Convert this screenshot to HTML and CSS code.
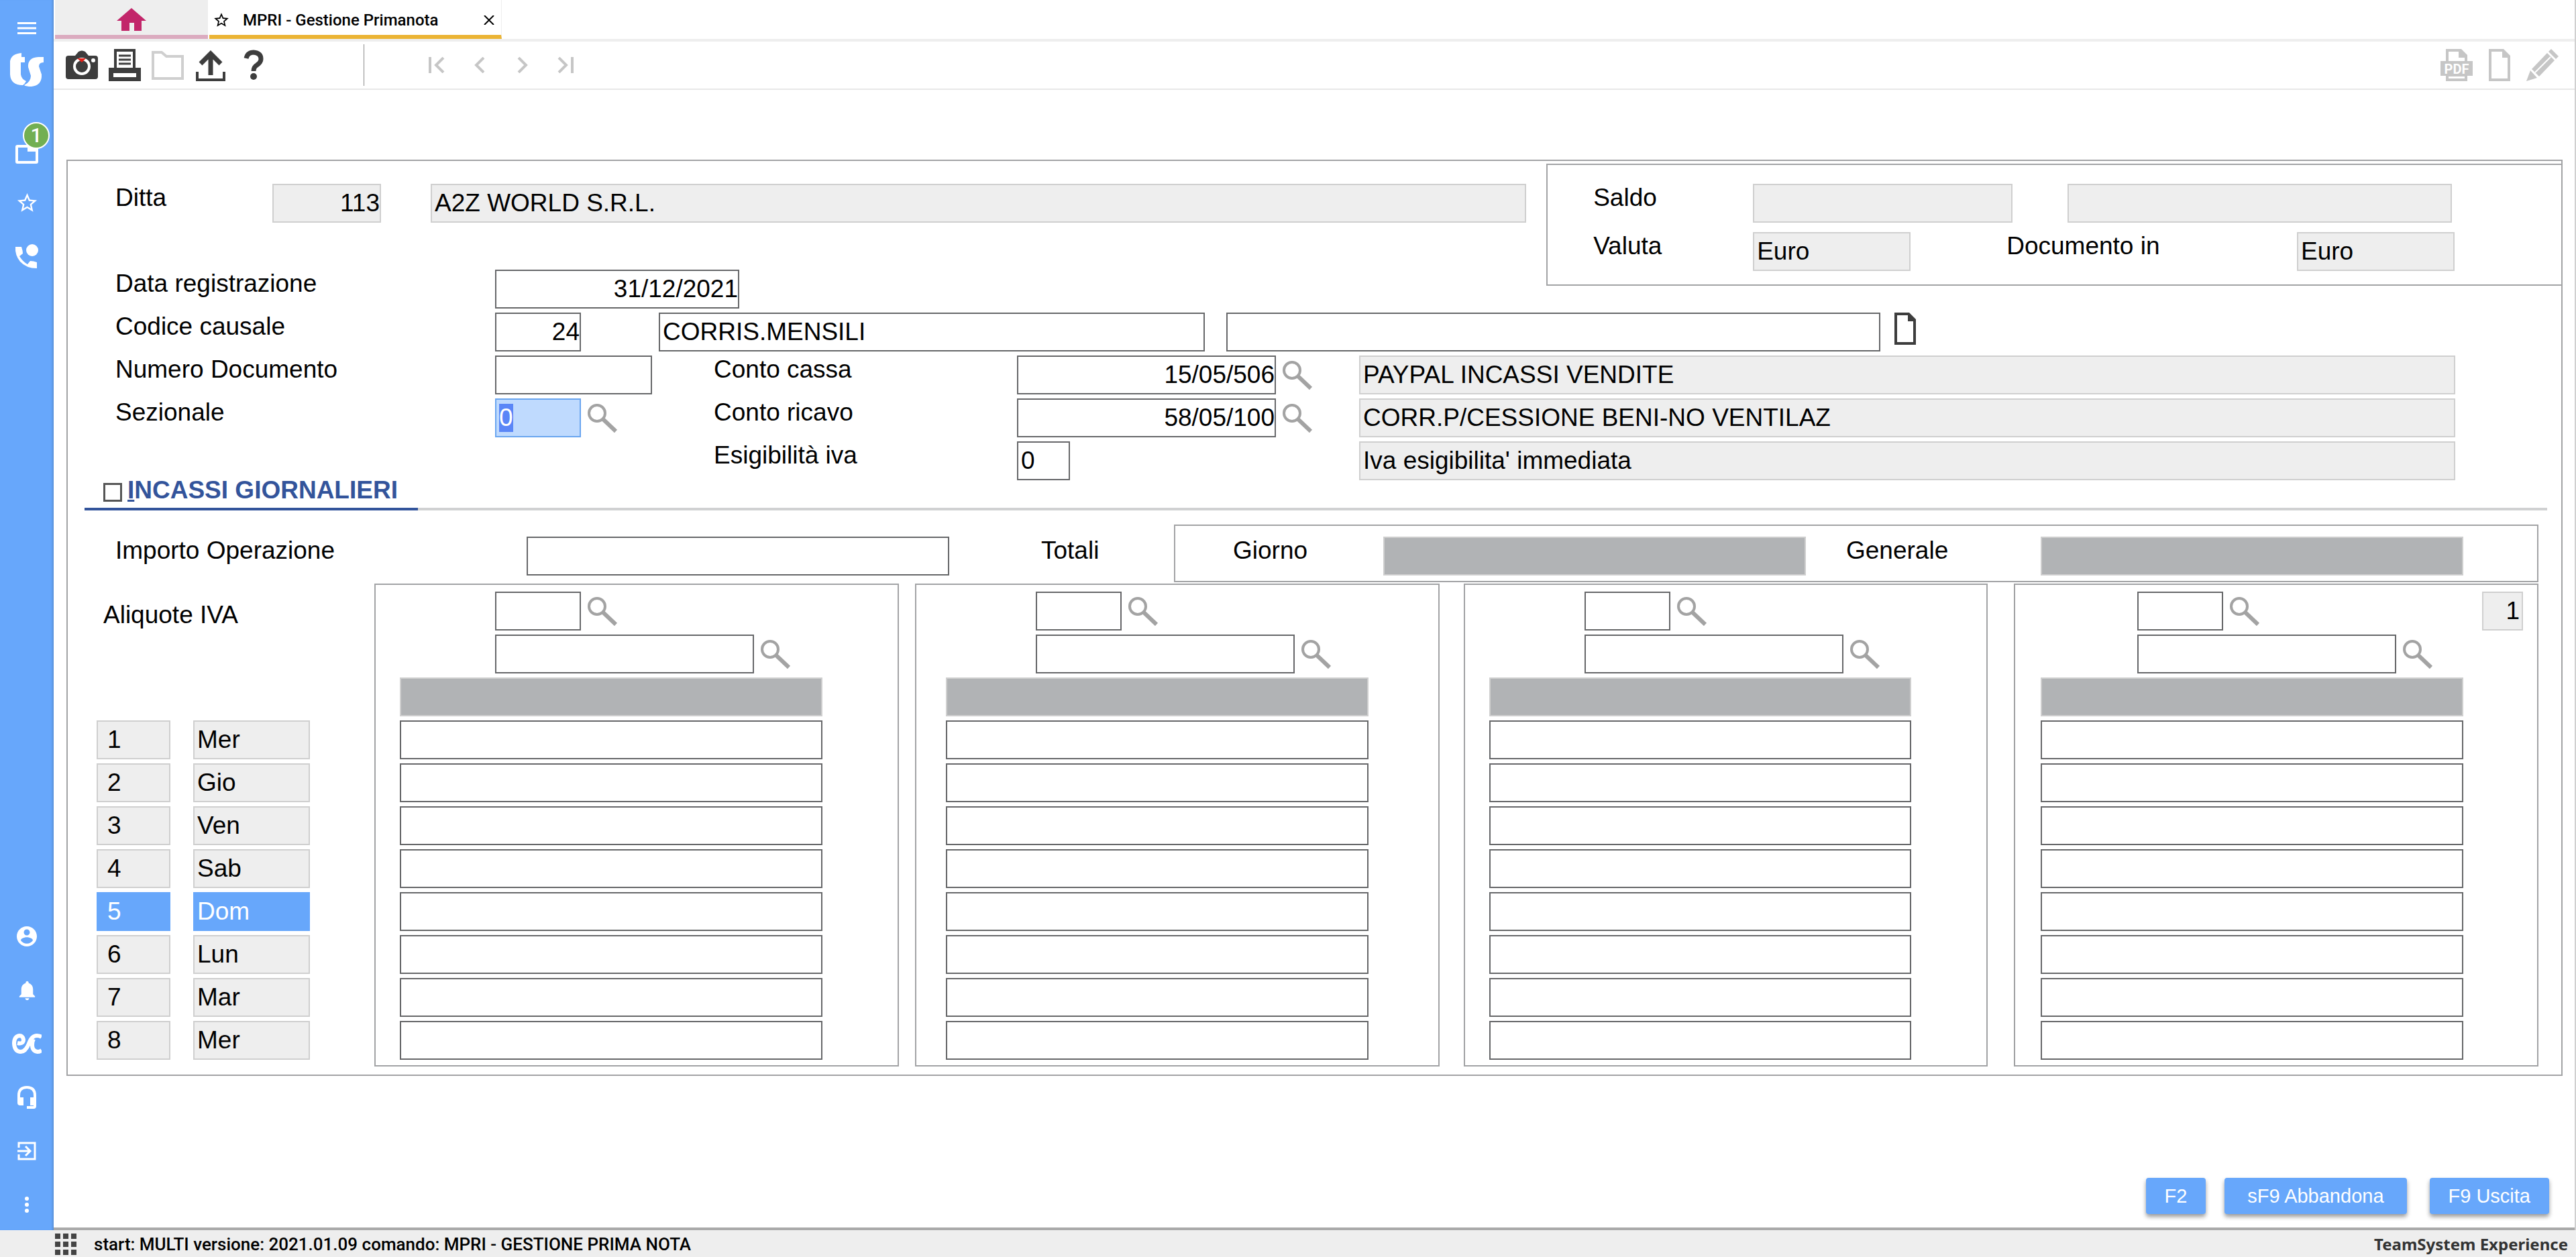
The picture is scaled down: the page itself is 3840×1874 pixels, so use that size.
FILE: index.html
```html
<!DOCTYPE html>
<html lang="it">
<head>
    <meta charset="UTF-8">
    <meta name="viewport" content="width=device-width, initial-scale=1.0">
    <title>MPRI - Gestione Primanota</title>
    <link rel="stylesheet" href="styles.css">
</head>
<body>
    <!-- icone condivise -->
    <svg class="symbols" aria-hidden="true">
        <symbol id="i-lens" viewBox="0 0 46 46">
            <circle cx="15" cy="16" r="12" fill="none" stroke="#a3a3a3" stroke-width="4"/>
            <path d="M24 25L43 43" stroke="#a3a3a3" stroke-width="6"/>
        </symbol>
        <symbol id="i-doc" viewBox="0 0 48 48">
            <path fill="currentColor" fill-rule="evenodd" d="M8 0H30L40 10V48H8ZM12 4V44H36V13H28V4Z"/>
        </symbol>
        <symbol id="i-star" viewBox="0 0 24 24">
            <path fill="currentColor" d="M22 9.24l-7.19-.62L12 2 9.19 8.63 2 9.24l5.46 4.73L5.82 21 12 17.27 18.18 21l-1.63-7.03L22 9.24zM12 15.4l-3.76 2.27 1-4.28-3.32-2.88 4.38-.38L12 6.1l1.71 4.04 4.38.38-3.32 2.88 1 4.28L12 15.4z"/>
        </symbol>
    </svg>

    <div class="main">
        <nav class="sidebar">
            <button class="side-btn side-menu" aria-label="Menu">
                <svg viewBox="0 0 28 18" width="28" height="18"><path d="M0 1.5H28M0 9H28M0 16.5H28" stroke="#fff" stroke-width="3"/></svg>
            </button>
            <button class="side-btn side-logo" aria-label="TeamSystem">
                <svg viewBox="0 0 50 50" width="50" height="50" fill="#fff">
                    <path d="M0 12Q2 1 17 0V6H22V14H16V32Q17 39 24 42Q22 46 19 48Q1 48 0 32Z"/>
                    <path d="M50 6V14Q43 14 43 20L47 32Q48 48 32 50Q24 50 21 48Q31 43 31 34L27 21Q26 7 42 6Z"/>
                </svg>
            </button>
            <button class="side-btn side-cards" aria-label="Attività">
                <svg viewBox="0 0 34 28" width="34" height="28">
                    <path d="M3 2H31Q32 2 32 3V25Q32 26 31 26H3Q2 26 2 25V3Q2 2 3 2Z" fill="none" stroke="#fff" stroke-width="4"/>
                    <path d="M18 2H32V10H18Z" fill="#fff"/>
                </svg>
                <span class="badge">1</span>
            </button>
            <button class="side-btn" aria-label="Preferiti"><svg class="side-icon"><use href="#i-star"/></svg></button>
            <button class="side-btn side-phone" aria-label="Chiamate">
                <svg viewBox="0 0 36 36" width="36" height="36" fill="#fff">
                    <circle cx="26" cy="9" r="9"/>
                    <path d="M1 4H10Q12 10 12 14L7 18Q12 26 19 30L23 25Q28 25 33 27V36Q17 36 8 26Q0 16 1 4Z"/>
                </svg>
            </button>
            <div class="side-bottom">
                <button class="side-btn" aria-label="Utente">
                    <svg viewBox="2 2 20 20" width="30" height="30"><path fill="#fff" d="M12 2C6.48 2 2 6.48 2 12s4.48 10 10 10 10-4.48 10-10S17.52 2 12 2zm0 3c1.66 0 3 1.34 3 3s-1.34 3-3 3-3-1.34-3-3 1.34-3 3-3zm0 14.200c-2.500 0-4.710-1.280-6-3.220.030-1.990 4-3.080 6-3.080 1.990 0 5.970 1.090 6 3.080-1.290 1.940-3.500 3.220-6 3.220z"/></svg>
                </button>
                <button class="side-btn" aria-label="Notifiche"><svg class="side-icon" viewBox="0 0 24 24"><path fill="#fff" d="M12 22c1.100 0 2-.900 2-2h-4c0 1.100.900 2 2 2zm6-6v-5c0-3.070-1.640-5.640-4.500-6.320V4c0-.830-.670-1.500-1.500-1.500s-1.500.670-1.500 1.500v.680C7.630 5.360 6 7.920 6 11v5l-2 2v1h16v-1l-2-2z"/></svg></button>
                <button class="side-btn" aria-label="Euroconference">
                    <svg viewBox="0 0 44 30" width="44" height="30"><path d="M8 14Q17 16 17 9Q16 3 11 3Q3 4 3 15Q4 27 13 27Q20 27 25 15Q29 3 37 3Q41 3 44 5M44 25Q41 27 38 27Q30 26 30 17Q30 12 32 8" fill="none" stroke="#fff" stroke-width="6"/></svg>
                </button>
                <button class="side-btn" aria-label="Assistenza">
                    <svg viewBox="0 0 28 34" width="28" height="34"><path d="M2 20V14Q2 2 14 2T26 14V30Q26 32 24 32H14" fill="none" stroke="#fff" stroke-width="4"/><path d="M0 17H9V29H4Q0 29 0 25ZM19 17H28V29H19Z" fill="#fff"/></svg>
                </button>
                <button class="side-btn" aria-label="Esci">
                    <svg viewBox="0 0 28 28" width="28" height="28"><path d="M2 9V2H26V26H2V19M0 14H18M12 7L19 14L12 21" fill="none" stroke="#fff" stroke-width="3"/></svg>
                </button>
                <button class="side-btn" aria-label="Altro">
                    <svg viewBox="0 0 8 24" width="8" height="24" fill="#fff"><circle cx="4" cy="3" r="3"/><circle cx="4" cy="12" r="3"/><circle cx="4" cy="21" r="3"/></svg>
                </button>
            </div>
        </nav>

        <div class="content">
            <header class="tabs">
                <a class="tab-home" href="#" aria-label="Home">
                    <svg viewBox="0 0 44 34" width="44" height="34"><path fill="#c2266a" d="M22 0L44 19H37V34H26V22H19V34H7V19H0Z"/></svg>
                </a>
                <div class="tab-active">
                    <svg class="tab-star"><use href="#i-star"/></svg>
                    <span class="tab-title">MPRI - Gestione Primanota</span>
                    <button class="tab-close" aria-label="Chiudi">
                        <svg viewBox="0 0 16 14" width="16" height="14"><path d="M1 0L15 14M15 0L1 14" stroke="#000" stroke-width="2"/></svg>
                    </button>
                </div>
            </header>

            <div class="toolbar">
                <div class="tools">
                    <button class="tool" aria-label="Foto">
                        <svg viewBox="0 0 48 48"><path fill="#3d3d3d" d="M4 10H14L19 4Q24 1 29 4L34 10H44Q48 10 48 14V41Q48 45 44 45H4Q0 45 0 41V14Q0 10 4 10Z"/><circle cx="24" cy="26" r="11" fill="none" stroke="#fff" stroke-width="4"/><path d="M17 14H30L24 20Z" fill="#e32119"/><circle cx="41" cy="17" r="3" fill="#fff"/></svg>
                    </button>
                    <button class="tool" aria-label="Stampa">
                        <svg viewBox="0 0 48 48"><path fill="#3d3d3d" fill-rule="evenodd" d="M8 0H40V28H48V48H0V28H8ZM12 4V28H36V4ZM7 36V42H41V36Z"/><path d="M15 10H33M15 16H33M15 22H33" stroke="#3d3d3d" stroke-width="3"/></svg>
                    </button>
                    <button class="tool" aria-label="Apri">
                        <svg viewBox="0 0 48 48"><path fill="none" stroke="#cfcfcf" stroke-width="4" d="M2 5H15L22 11H46V44H2Z"/></svg>
                    </button>
                    <button class="tool" aria-label="Invia">
                        <svg viewBox="0 0 48 48"><path fill="none" stroke="#3d3d3d" stroke-width="7" d="M24 39V7M9 22L24 7L39 22"/><path fill="none" stroke="#3d3d3d" stroke-width="4" d="M4 34V46H44V34"/></svg>
                    </button>
                    <button class="tool" aria-label="Aiuto">
                        <svg viewBox="0 0 48 48"><path fill="none" stroke="#3d3d3d" stroke-width="7" d="M13 14Q15 5 24 5Q35 6 35 15Q35 20 29 24Q24 27 24 33"/><circle cx="24" cy="41" r="5" fill="#3d3d3d"/></svg>
                    </button>
                </div>
                <div class="pager">
                    <button class="page-btn" aria-label="Primo"><svg viewBox="0 0 24 24"><path d="M2 0V24M22 1L11 12L22 23"/></svg></button>
                    <button class="page-btn" aria-label="Precedente"><svg viewBox="0 0 24 24"><path d="M18 1L7 12L18 23"/></svg></button>
                    <button class="page-btn" aria-label="Successivo"><svg viewBox="0 0 24 24"><path d="M6 1L17 12L6 23"/></svg></button>
                    <button class="page-btn" aria-label="Ultimo"><svg viewBox="0 0 24 24"><path d="M2 1L13 12L2 23M22 0V24"/></svg></button>
                </div>
                <div class="tools tools-right">
                    <button class="tool" aria-label="PDF">
                        <svg viewBox="0 0 48 48"><path fill="#c6c6c6" fill-rule="evenodd" d="M8 0H31L40 9V18H48V40H40V48H8V40H0V18H8ZM12 4V18H36V13H27V4ZM12 41V44H36V41Z"/><text x="24" y="37" class="pdf-text">PDF</text></svg>
                    </button>
                    <button class="tool" aria-label="Nuovo"><svg><use href="#i-doc"/></svg></button>
                    <button class="tool" aria-label="Modifica">
                        <svg viewBox="0 0 48 48" fill="#c6c6c6"><path d="M37 0L48 11L44 15L33 4Z"/><path d="M31 6L42 17L19 41L8 30Z"/><path d="M6 32L16 43L0 48Z"/><path d="M13 35L36 12" stroke="#fff" stroke-width="2"/></svg>
                    </button>
                </div>
            </div>

            <main class="work">
                <form class="panel" onsubmit="return false">
                    <div class="head">
                        <div class="head-left">
                            <div class="row row-ditta">
                                <label for="ditta">Ditta</label>
                                <input class="field ro num" id="ditta" value="113" readonly>
                                <input class="field ro ragione" aria-label="Ragione sociale" value="A2Z WORLD S.R.L." readonly>
                            </div>
                            <div class="row">
                                <label class="label-main" for="data">Data registrazione</label>
                                <input class="field num data" id="data" value="31/12/2021">
                            </div>
                        </div>
                        <div class="saldo">
                            <div class="row">
                                <label for="saldo">Saldo</label>
                                <input class="field ro saldo-valuta" id="saldo" readonly>
                                <input class="field ro saldo-importo" aria-label="Importo saldo" readonly>
                            </div>
                            <div class="row row-valuta">
                                <label for="valuta">Valuta</label>
                                <input class="field ro valuta" id="valuta" value="Euro" readonly>
                                <label class="label-doc" for="docin">Documento in</label>
                                <input class="field ro valuta" id="docin" value="Euro" readonly>
                            </div>
                        </div>
                    </div>

                    <div class="rows">
                        <div class="row row-causale">
                            <label class="label-main" for="causale">Codice causale</label>
                            <input class="field num code" id="causale" value="24">
                            <input class="field causale-desc" aria-label="Descrizione causale" value="CORRIS.MENSILI">
                            <input class="field causale-note" aria-label="Note causale">
                            <button class="doc-btn" aria-label="Documento"><svg width="48" height="48"><use href="#i-doc"/></svg></button>
                        </div>
                        <div class="row row-grid">
                            <label for="numdoc">Numero Documento</label>
                            <input class="field numdoc" id="numdoc">
                            <label for="cassa">Conto cassa</label>
                            <div class="lookup">
                                <input class="field num conto" id="cassa" value="15/05/506">
                                <button class="lens" aria-label="Cerca conto cassa"><svg><use href="#i-lens"/></svg></button>
                            </div>
                            <input class="field ro" aria-label="Descrizione conto cassa" value="PAYPAL INCASSI VENDITE" readonly>
                        </div>
                        <div class="row row-grid">
                            <label for="sezionale">Sezionale</label>
                            <div class="lookup">
                                <input class="field code current" id="sezionale" value="0">
                                <button class="lens" aria-label="Cerca sezionale"><svg><use href="#i-lens"/></svg></button>
                            </div>
                            <label for="ricavo">Conto ricavo</label>
                            <div class="lookup">
                                <input class="field num conto" id="ricavo" value="58/05/100">
                                <button class="lens" aria-label="Cerca conto ricavo"><svg><use href="#i-lens"/></svg></button>
                            </div>
                            <input class="field ro" aria-label="Descrizione conto ricavo" value="CORR.P/CESSIONE BENI-NO VENTILAZ" readonly>
                        </div>
                        <div class="row row-grid">
                            <label class="label-esig" for="esig">Esigibilità iva</label>
                            <input class="field esig" id="esig" value="0">
                            <input class="field ro" aria-label="Descrizione esigibilità" value="Iva esigibilita' immediata" readonly>
                        </div>
                    </div>

                    <div class="section-tabs">
                        <label class="section-tab">
                            <input class="check" type="checkbox">
                            <span><u>I</u>NCASSI GIORNALIERI</span>
                        </label>
                    </div>

                    <div class="importi">
                        <label class="label-importo" for="importo">Importo Operazione</label>
                        <input class="field importo" id="importo">
                        <span class="label-totali">Totali</span>
                        <div class="totali">
                            <label for="giorno">Giorno</label>
                            <input class="field total" id="giorno" readonly>
                            <label class="label-generale" for="generale">Generale</label>
                            <input class="field total" id="generale" readonly>
                        </div>
                    </div>

                    <div class="registro">
                        <div class="giorni">
                            <span class="label-aliquote">Aliquote IVA</span>
                            <div id="giorni"></div>
                        </div>
                        <div class="aliquote" id="aliquote"></div>
                    </div>
                </form>

                <div class="actions">
                    <button class="action">F2</button>
                    <button class="action action-wide">sF9 Abbandona</button>
                    <button class="action action-exit">F9 Uscita</button>
                </div>
            </main>
        </div>
    </div>

    <footer class="status">
        <svg viewBox="0 0 32 32" width="32" height="32"><path d="M0 4H32M0 16H32M0 28H32" stroke="#444" stroke-width="8" stroke-dasharray="8 4"/></svg>
        <span>start: MULTI versione: 2021.01.09 comando: MPRI - GESTIONE PRIMA NOTA</span>
        <strong class="brand">TeamSystem Experience</strong>
    </footer>

<script>
const giorni = ['Mer', 'Gio', 'Ven', 'Sab', 'Dom', 'Lun', 'Mar', 'Mer'];
const lens = '<svg><use href="#i-lens"/></svg>';

// righe dei giorni, la domenica evidenziata
document.getElementById('giorni').innerHTML = giorni.map((g, i) => `
    <div class="giorno${g === 'Dom' ? ' festivo' : ''}">
        <input class="field ro giorno-num" aria-label="Giorno" value="${i + 1}" readonly>
        <input class="field ro giorno-nome" aria-label="Nome giorno" value="${g}" readonly>
    </div>`).join('');

// quattro colonne aliquota
document.getElementById('aliquote').innerHTML = [1, 2, 3, 4].map(n => `
    <div class="aliquota">
        <div class="codici">
            <input class="field code" aria-label="Codice aliquota ${n}">
            <button class="lens" aria-label="Cerca aliquota ${n}">${lens}</button>
            ${n === 4 ? '<input class="field ro num pagina" aria-label="Pagina" value="1" readonly>' : ''}
        </div>
        <div class="codici">
            <input class="field conto" aria-label="Conto aliquota ${n}">
            <button class="lens" aria-label="Cerca conto ${n}">${lens}</button>
        </div>
        <input class="field total" aria-label="Totale aliquota ${n}" readonly>
        ${giorni.map((g, i) => `<input class="field" aria-label="Importo ${i + 1} ${g}, aliquota ${n}">`).join('')}
    </div>`).join('');

const sezionale = document.getElementById('sezionale');
sezionale.focus();
sezionale.select();
</script>
</body>
</html>
```

FILE: styles.css
```css
:root {
    --blue: #67a7fb;
    --dark: #3d3d3d;
    --line: #a2a3a5;
    --field: #666769;
    --grey: #eeeeee;
    --grey-line: #cfcfcf;
    --total: #b1b3b5;
    --title: #33549b;
}

* {
    box-sizing: border-box;
}

body {
    margin: 0;
    min-height: 100vh;
    display: flex;
    flex-direction: column;
    background: #fff;
    color: #000;
    font-family: "Liberation Sans", Arial, sans-serif;
    font-size: 37px;
    line-height: 42px;
}

button {
    padding: 0;
    border: none;
    background: none;
    color: inherit;
    font: inherit;
    cursor: pointer;
}

svg {
    display: block;
}

.symbols {
    position: absolute;
    width: 0;
    height: 0;
}

.main {
    flex: 1;
    display: flex;
}

/* barra laterale */
.sidebar {
    width: 80px;
    flex: none;
    padding-top: 12px;
    display: flex;
    flex-direction: column;
    background: var(--blue);
    box-shadow: inset -4px 0 3px -2px rgba(0,0,0,0.15);
}

.side-btn {
    position: relative;
    width: 80px;
    height: 72px;
    display: flex;
    align-items: center;
    justify-content: center;
    color: #fff;
}

.side-icon {
    width: 35px;
    height: 35px;
}

.side-menu { height: 60px; }
.side-logo { height: 64px; }
.side-cards { margin-top: 58px; }
.side-phone { margin-top: 8px; }

.badge {
    position: absolute;
    top: -12px;
    right: 6px;
    width: 40px;
    height: 40px;
    border: 2px solid #fff;
    border-radius: 50%;
    background: #72af53;
    font: 500 30px/36px Roboto, sans-serif;
}

.side-bottom {
    margin-top: auto;
}

.side-bottom .side-btn {
    height: 80px;
    padding-top: 4px;
}

.content {
    flex: 1;
    min-width: 0;
    display: flex;
    flex-direction: column;
    border-right: 2px solid #d0d0d0;
}

/* schede */
.tabs {
    height: 62px;
    padding-left: 2px;
    display: flex;
    gap: 2px;
    border-bottom: 4px solid var(--grey);
}

.tab-home {
    width: 228px;
    display: flex;
    align-items: center;
    justify-content: center;
    background: var(--grey);
    border-bottom: 6px solid #dbabbf;
    padding-top: 6px;
}

.tab-active {
    width: 436px;
    padding: 8px 10px 0 5px;
    display: flex;
    align-items: center;
    border-bottom: 6px solid #ebb434;
    border-right: 1px solid var(--grey);
}

.tab-star {
    width: 26px;
    height: 26px;
}

.tab-title {
    margin-left: 19px;
    font: 500 24px/30px Roboto, sans-serif;
    white-space: nowrap;
}

.tab-close {
    margin-left: auto;
}

/* toolbar */
.toolbar {
    height: 72px;
    padding: 0 24px 0 18px;
    display: flex;
    align-items: center;
    border-bottom: 2px solid #e8e8e8;
}

.tools {
    display: flex;
    gap: 16px;
}

.tools-right {
    margin-left: auto;
    color: #c6c6c6;
}

.tool,
.tool svg {
    width: 48px;
    height: 48px;
}

.pdf-text {
    fill: #fff;
    font: 700 20px Roboto, sans-serif;
    text-anchor: middle;
}

.pager {
    height: 62px;
    margin-left: 140px;
    padding-left: 96px;
    display: flex;
    align-items: center;
    gap: 40px;
    border-left: 1px solid #8a8a8a;
}

.page-btn svg {
    width: 24px;
    height: 24px;
    fill: none;
    stroke: #c6c6c6;
    stroke-width: 4;
}

/* area di lavoro */
.work {
    flex: 1;
    padding: 104px 18px 20px 19px;
    display: flex;
    flex-direction: column;
    border-bottom: 4px solid #aaaaaa;
}

.panel {
    border: 2px solid var(--line);
    padding-bottom: 12px;
}

.field {
    min-width: 0;
    height: 58px;
    padding: 0 4px;
    border: 2px solid var(--field);
    border-radius: 0;
    background: #fff;
    color: #000;
    font: inherit;
    outline: none;
}

.field.ro {
    background: var(--grey);
    border-color: var(--grey-line);
}

.field.total {
    background: var(--total);
    border-color: var(--grey-line);
}

.field.num {
    padding: 0;
    text-align: right;
}

.field.current {
    background: #bfdafe;
    border-color: #69a5f0;
}

.field.current::selection {
    background: #5a86f7;
    color: #fff;
}

.code { width: 128px; }
.conto { width: 386px; }
.data { width: 364px; }
.numdoc { width: 234px; }
.esig { width: 79px; }

.row {
    display: flex;
    align-items: flex-start;
}

.row label,
.importi label {
    padding-left: 2px;
}

.label-main {
    width: 568px;
}

.head {
    display: flex;
    padding-top: 4px;
}

.head-left {
    flex: 1;
    padding: 30px 30px 0 69px;
}

.row-ditta {
    margin-bottom: 70px;
}

.row-ditta label { width: 236px; }
.row-ditta .num { width: 162px; margin-right: 74px; }
.ragione { flex: 1; }

.saldo {
    width: 40.7%;
    height: 182px;
    padding: 28px 159px 0 66px;
    border: 2px solid var(--line);
    border-right: none;
}

.saldo .row label { width: 240px; }
.saldo-valuta { width: 387px; }
.saldo-importo { flex: 1; margin: 0 4px 0 82px; }
.row-valuta { margin-top: 14px; }
.valuta { width: 235px; }
.saldo .row .label-doc { width: auto; margin: 0 auto 0 141px; }

.rows {
    margin-top: 6px;
    padding: 0 158px 0 69px;
    display: grid;
    gap: 6px;
}

.row-causale { padding-right: 796px; }
.causale-desc { flex: 5; margin: 0 32px 0 116px; }
.causale-note { flex: 6; }

.doc-btn {
    margin-left: 13px;
    color: var(--dark);
}

.row-grid {
    display: grid;
    grid-template-columns: 568px 324px 454px 510px 1fr;
}

.label-esig {
    grid-column: 3;
}

.lookup {
    display: flex;
    gap: 9px;
}

.lens,
.lens svg {
    width: 46px;
    height: 46px;
}

.lens {
    margin-top: 6px;
}

/* titolo sezione */
.section-tabs {
    display: flex;
    margin: 0 21px 0 25px;
}

.section-tabs::after {
    content: '';
    flex: 1;
    border-bottom: 4px solid #d0d1d2;
}

.section-tab {
    width: 497px;
    height: 45px;
    padding-left: 28px;
    display: flex;
    border-bottom: 4px solid var(--title);
    color: var(--title);
    font-weight: bold;
    line-height: 30px;
    white-space: nowrap;
}

.check {
    appearance: none;
    width: 28px;
    height: 28px;
    margin: 4px 8px 0 0;
    border: 3px solid #555;
}

.importi {
    margin: 21px 34px 0 69px;
    display: flex;
}

.importi label,
.label-totali {
    padding-top: 18px;
}

.label-importo { width: 615px; }
.importo { width: 630px; margin-top: 18px; }
.label-totali { width: 198px; margin-left: 137px; }

.totali {
    flex: 1;
    height: 86px;
    padding: 16px 110px 0 84px;
    display: flex;
    border: 2px solid var(--line);
}

.importi .totali label { width: 226px; padding-top: 0; }
.importi .totali .label-generale { width: 292px; margin-left: 58px; }
.totali .field { flex: 1; }

.registro {
    margin: 2px 34px 0 43px;
    display: flex;
}

.giorni {
    width: 414px;
    display: flex;
    flex-direction: column;
    justify-content: space-between;
    padding: 26px 0 10px;
}

.label-aliquote {
    padding-left: 10px;
}

.giorno {
    display: flex;
    gap: 34px;
}

.giorno + .giorno {
    margin-top: 6px;
}

.giorno-num { width: 110px; padding-left: 14px; }
.giorno-nome { width: 174px; }

.festivo .field {
    background: var(--blue);
    border-color: var(--blue);
    color: #fff;
}

.aliquote {
    flex: 1;
    display: flex;
}

.aliquota {
    flex: 1;
    padding: 10px 0 8px;
    display: flex;
    flex-direction: column;
    gap: 6px;
    border: 2px solid var(--line);
}

.aliquota:nth-child(2) { margin-left: 24px; }
.aliquota:nth-child(3) { margin-left: 36px; }
.aliquota:nth-child(4) { margin-left: 39px; }

.codici {
    display: flex;
    gap: 9px;
    padding: 0 21px 0 178px;
}

.aliquota > .field {
    margin: 0 112px 0 36px;
}

.aliquota:nth-child(2) > .field {
    margin: 0 104px 0 44px;
}

.aliquota:nth-child(4) > .field {
    margin: 0 110px 0 38px;
}

.aliquota:nth-child(4) .codici {
    padding-left: 182px;
}

.pagina {
    width: 61px;
    margin-left: auto;
}

.field.pagina {
    padding-right: 3px;
}

/* tasti funzione */
.actions {
    margin-top: auto;
    padding-right: 20px;
    display: flex;
    justify-content: flex-end;
    gap: 28px;
}

.action {
    height: 54px;
    padding: 0 28px;
    border-radius: 4px;
    background: var(--blue);
    color: #fff;
    font-size: 29px;
    box-shadow: 0 4px 6px rgba(0,0,0,0.4);
}

.action-wide { padding: 0 34px; }
.action-exit { margin-left: 6px; }

/* barra di stato */
.status {
    height: 40px;
    padding: 2px 12px 0 82px;
    display: flex;
    align-items: center;
    background: var(--grey);
    font: 500 26px/30px Roboto, sans-serif;
}

.status span {
    margin-left: 26px;
}

.brand {
    margin-left: auto;
    color: #333;
    font: 700 24px/30px "Noto Sans", sans-serif;
}
```
